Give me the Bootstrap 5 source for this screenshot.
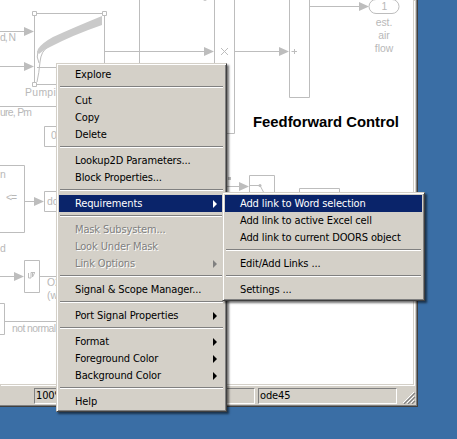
<!DOCTYPE html>
<html lang="en"><head><meta charset="utf-8"><title>Feedforward Control</title>
<meta name="viewport" content="width=device-width, initial-scale=1">
<link href="https://cdn.jsdelivr.net/npm/bootstrap@5.3.0/dist/css/bootstrap.min.css" rel="stylesheet">
<style>
body{background:#3a6ea5;font:11px/17px "DejaVu Sans Condensed","DejaVu Sans",sans-serif;font-stretch:condensed;letter-spacing:-.13px;color:#000;width:457px;height:439px}
.model-window{width:418px;height:407px;background:#d4d0c8;border-right:1px solid #404040;border-bottom:1px solid #404040;box-shadow:inset -1px -1px #808080}
.canvas{width:414px;height:385px;background:#fff;border-right:1px solid #d4d0c8;border-bottom:1px solid #d4d0c8;box-shadow:1px 1px #fff}
.canvas svg{width:413px;height:384px}
.wire{fill:none;stroke:#bdbdbd;stroke-width:1}
.tip{fill:#bdbdbd}
.lbl{font:10.4px "Liberation Sans",Arial,sans-serif;fill:#b8b8b8;letter-spacing:0}
.title{font:bold 14.4px "Liberation Sans",Arial,sans-serif;fill:#000;letter-spacing:0}
.statusbar{height:16px;margin:3px 0 0 34px;gap:3px}
.panel{border:1px solid;border-color:#808080 #fff #fff #808080;line-height:14px;padding-left:1px;height:16px}
.zoom-panel{width:221px}.solver-panel{width:139px}
.grip{width:13px;height:13px;margin:3px 0 0 3px}
.context-menu{background:#d4d0c8;border:1px solid;border-color:#d4d0c8 #404040 #404040 #d4d0c8;box-shadow:inset 1px 1px #fff,inset -1px -1px #808080,2px 2px 2px rgba(0,0,0,.55);padding:2px}
.main-menu{left:56px;top:63px;width:171px;height:349px}
.sub-menu{left:222px;top:192px;width:203px;height:109px}
.entry{height:17px;padding:0 7px 0 16px;white-space:nowrap;line-height:17px}
.sub-menu .entry{padding-left:15px}
.entry svg{width:4px;height:8px;fill:currentColor}
.chosen{background:#0a246a;color:#fff}
.greyed{color:#808080;text-shadow:1px 1px #fff}
.rule{height:2px;margin:3px 1px 4px;border-top:1px solid #808080;border-bottom:1px solid #fff}
</style></head>
<body class="m-0 overflow-hidden position-relative">
<main class="model-window d-flex flex-column align-items-start">
<div class="canvas overflow-hidden"><svg class="d-block" viewBox="0 0 413 384">
<g class="wire">
<path d="M0 31.500H25M0 66.500H25M34.500 13.500H104.500V84.500H34.500ZM104.500 51.500H205M139.500 0V70M37 67.500H60M0 106.500H60"/>
<path d="M214.500 0V133.500H234.500V0M234.500 51.500H280M289.500 0V97.500H309.500V0M309.500 6.500H360"/>
<path d="M376 -.5H392A7 7 0 0 1 392 13.500H376A7 7 0 0 1 376 -.5Z"/>
<path d="M221 48L228 55M228 48L221 55M291.500 51.500H297M294.500 49V54"/>
<path d="M60 126.500H44.500V146.500H60M0 165.500H24.500V232.500H0M24.500 201.500H35M60 191.500H44.500V211.500H60"/>
<path d="M0 276.500H15M24.500 260.500H39.500V292.500H24.500ZM39.500 276.500H60M0 303.500H4.500V334.500H0M4.500 321.500H60"/>
<path d="M28.500 273V278H31V272.500H35M32.500 272.500V277L34.500 273"/>
<path d="M225 186.500H240M249.500 200V175.500H274.500V200M250 185.500H260L264 193M299.500 195V188.500H339.500V195"/>
<path d="M37 82Q39 73 40 62T48 47M38 51Q36 57 39 63"/>
</g>
<path d="M38 49Q42 43 53 37Q75 27 102 16V25Q73 35 50 47Q43 50 39 54L37 52Z" fill="#cacaca"/>
<g class="tip"><path d="M24 27V36L34 31.500ZM24 62V71L34 66.500ZM204 47V56L214 51.500ZM279 47V56L289 51.500ZM359 2V11L369 6.500ZM34 197V206L44 201.500ZM14 272V281L24 276.500ZM239 182V191L249 186.500ZM203 0H207L205 1ZM228 177H231V180H228Z"/><circle cx="260" cy="185.500" r="1.500"/></g>
<g fill="#fff" stroke="#bdbdbd"><path d="M32.500 11.500H36.500V15.500H32.500ZM102.500 11.500H106.500V15.500H102.500ZM32.500 82.500H36.500V86.500H32.500Z"/></g>
<g class="lbl">
<text x="0" y="41" textLength="16">d, N</text><text x="25" y="96" textLength="43">Pumping</text><text x="0" y="116" textLength="32">ure, Pm</text><text x="51" y="139">0</text><text x="0" y="178" textLength="4">n</text><text x="6" y="201" textLength="11">&lt;=</text><text x="47" y="205">do</text><text x="0" y="252" textLength="4">d</text><text x="47" y="286">O2</text><text x="47" y="299">(w</text><text x="12" y="332" textLength="44">not normal</text>
<text x="381.500" y="10">1</text><text x="384" y="26" text-anchor="middle">est.</text><text x="384" y="39" text-anchor="middle">air</text><text x="384" y="52" text-anchor="middle">flow</text></g>
<text class="title" x="253" y="127" textLength="146" lengthAdjust="spacingAndGlyphs">Feedforward Control</text>
</svg></div>
<div class="statusbar d-flex"><div class="panel zoom-panel">100%</div><div class="panel solver-panel">ode45</div>
<svg class="grip" viewBox="0 0 13 13" fill="none"><path d="M0 12L11 1M4 12L11 5M8 12L11 9" stroke="#fff"/><path d="M1 13L12 2M5 13L12 6M9 13L12 10" stroke="#808080" stroke-width="1.200"/></svg></div>
</main>
<nav class="context-menu main-menu position-absolute">
<div class="entry">Explore</div><div class="rule"></div>
<div class="entry">Cut</div><div class="entry">Copy</div><div class="entry">Delete</div><div class="rule"></div>
<div class="entry">Lookup2D Parameters...</div><div class="entry">Block Properties...</div><div class="rule"></div>
<div class="entry chosen d-flex justify-content-between align-items-center">Requirements<svg viewBox="0 0 4 8"><path d="M0 0L4 4L0 8Z"/></svg></div><div class="rule"></div>
<div class="entry greyed">Mask Subsystem...</div><div class="entry greyed">Look Under Mask</div>
<div class="entry greyed d-flex justify-content-between align-items-center">Link Options<svg viewBox="0 0 4 8"><path d="M0 0L4 4L0 8Z"/></svg></div><div class="rule"></div>
<div class="entry">Signal &amp; Scope Manager...</div><div class="rule"></div>
<div class="entry d-flex justify-content-between align-items-center">Port Signal Properties<svg viewBox="0 0 4 8"><path d="M0 0L4 4L0 8Z"/></svg></div><div class="rule"></div>
<div class="entry d-flex justify-content-between align-items-center">Format<svg viewBox="0 0 4 8"><path d="M0 0L4 4L0 8Z"/></svg></div>
<div class="entry d-flex justify-content-between align-items-center">Foreground Color<svg viewBox="0 0 4 8"><path d="M0 0L4 4L0 8Z"/></svg></div>
<div class="entry d-flex justify-content-between align-items-center">Background Color<svg viewBox="0 0 4 8"><path d="M0 0L4 4L0 8Z"/></svg></div><div class="rule"></div>
<div class="entry">Help</div>
</nav>
<nav class="context-menu sub-menu position-absolute">
<div class="entry chosen">Add link to Word selection</div><div class="entry">Add link to active Excel cell</div><div class="entry">Add link to current DOORS object</div><div class="rule"></div>
<div class="entry">Edit/Add Links ...</div><div class="rule"></div><div class="entry">Settings ...</div>
</nav>
<script src="https://cdn.jsdelivr.net/npm/bootstrap@5.3.0/dist/js/bootstrap.bundle.min.js"></script>
</body></html>
